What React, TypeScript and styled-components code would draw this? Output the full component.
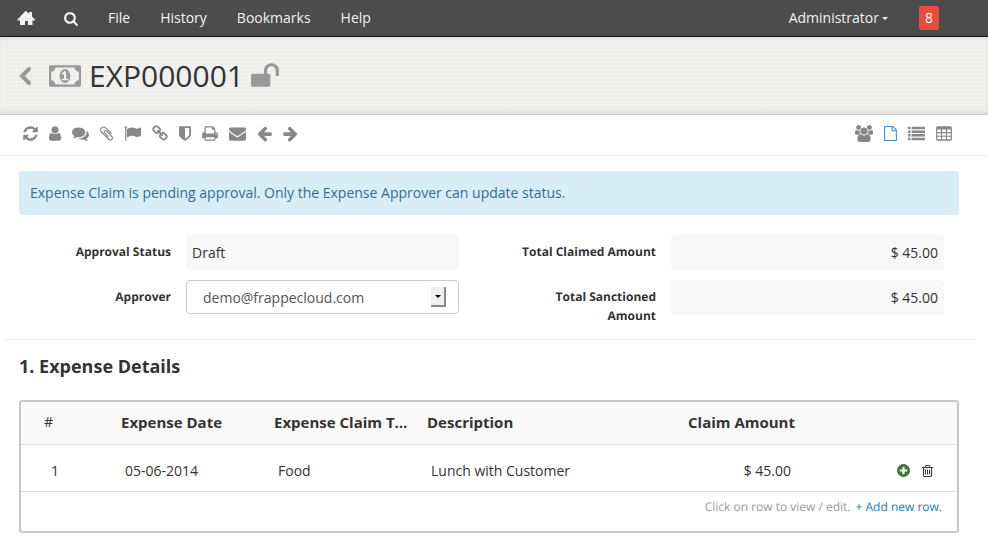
import React from 'react';
import styled, { createGlobalStyle } from 'styled-components';

const GlobalStyle = createGlobalStyle`
  *, *::before, *::after { box-sizing: border-box; }
  body {
    margin: 0;
    background: #fff;
    color: #333;
    font-family: 'Open Sans', 'Noto Sans', sans-serif;
    font-size: 14px;
    line-height: 20px;
  }
  a { text-decoration: none; color: inherit; }
  button { font: inherit; color: inherit; background: none; border: 0; padding: 0; margin: 0; cursor: pointer; }
`;

/* Glyphs are drawn on a 1792-unit em square; `box` is the visible horizontal span. */
type Glyph = { box: [number, number]; d: string };

const rect = (x: number, y: number, w: number, h: number) => `M${x} ${y}h${w}v${h}h${-w}z`;

const glyphs: Record<string, Glyph> = {
  search: { box: [64, 1664], d: 'M1216 832q0-185-131.5-316.5t-316.5-131.5-316.5 131.5-131.5 316.5 131.5 316.5 316.5 131.5 316.5-131.5 131.5-316.5zm512 832q0 52-38 90t-90 38q-54 0-90-38l-343-342q-179 124-399 124-143 0-273.5-55.5t-225-150-150-225-55.5-273.5 55.5-273.5 150-225 225-150 273.5-55.5 273.5 55.5 225 150 150 225 55.5 273.5q0 220-124 399l343 343q37 37 37 90z' },
  money: { box: [0, 1920], d: 'M768 1152h384v-96h-128v-448h-114l-148 137 77 80q42-37 55-57h2v288h-128v96zm512-256q0 70-21 142t-59.5 134-101.5 101-138 39-138-39-101.5-101-59.5-134-21-142 21-142 59.5-134 101.5-101 138-39 138 39 101.5 101 59.5 134 21 142zm512 256v-512q-106 0-181-75t-75-181h-1152q0 106-75 181t-181 75v512q106 0 181 75t75 181h1152q0-106 75-181t181-75zm128-832v1152q0 26-19 45t-45 19h-1792q-26 0-45-19t-19-45v-1152q0-26 19-45t45-19h1792q26 0 45 19t19 45z' },
  unlock: { box: [64, 1664], d: 'M1728 576v256q0 26-19 45t-45 19h-64q-26 0-45-19t-19-45v-256q0-106-75-181t-181-75-181 75-75 181v192h96q40 0 68 28t28 68v576q0 40-28 68t-68 28h-960q-40 0-68-28t-28-68v-576q0-40 28-68t68-28h672v-192q0-185 131.5-316.5t316.5-131.5 316.5 131.5 131.5 316.5z' },
  refresh: { box: [128, 1536], d: 'M1639 1056q0 5-1 7-64 268-268 434.5t-478 166.5q-146 0-282.5-55t-243.5-157l-129 129q-19 19-45 19t-45-19-19-45v-448q0-26 19-45t45-19h448q26 0 45 19t19 45-19 45l-137 137q71 66 161 102t187 36q134 0 250-65t186-179q11-17 53-117 8-23 30-23h192q13 0 22.5 9.5t9.5 22.5zm25-800v448q0 26-19 45t-45 19h-448q-26 0-45-19t-19-45 19-45l138-138q-148-137-349-137-134 0-250 65t-186 179q-11 17-53 117-8 23-30 23h-199q-13 0-22.5-9.5t-9.5-22.5v-7q65-268 270-434.5t480-166.5q146 0 284 55.5t245 156.5l130-129q19-19 45-19t45 19 19 45z' },
  user: { box: [256, 1280], d: 'M1536 1399q0 109-62.5 187t-150.5 78h-854q-88 0-150.5-78t-62.5-187q0-85 8.5-160.5t31.5-152 58.5-131 94-89 134.5-34.5q131 128 313 128t313-128q76 0 134.5 34.5t94 89 58.5 131 31.5 152 8.5 160.5zm-256-887q0 159-112.5 271.5t-271.5 112.5-271.5-112.5-112.5-271.5 112.5-271.5 271.5-112.5 271.5 112.5 112.5 271.5z' },
  comments: { box: [0, 1792], d: 'M1408 768q0 139-94 257t-256.5 186.5-353.5 68.5q-86 0-176-16-124 88-278 128-36 9-86 16h-3q-11 0-20.5-8t-11.5-21q-1-3-1-6.5t.5-6.5 2-6l2.5-5 3.5-5.5 4-5 4.5-5 4-4.5q5-6 23-25t26-29.5 22.5-29 25-38.5 20.5-44q-124-72-195-177t-71-224q0-139 94-257t256.5-186.5 353.5-68.5 353.5 68.5 256.5 186.5 94 257zm384 256q0 120-71 224.5t-195 176.5q10 24 20.5 44t25 38.5 22.5 29 26 29.5 23 25q1 1 4 4.5t4.5 5 4 5 3.5 5.5l2.5 5 2 6 .5 6.5-1 6.5q-3 14-13 22t-22 7q-50-7-86-16-154-40-278-128-90 16-176 16-271 0-472-132 58 4 88 4 161 0 309-45t264-129q125-92 192-212t67-254q0-77-23-152 129 71 204 178t75 230z' },
  paperclip: { box: [196, 1400], d: 'M1596 1385q0 117-79 196t-196 79q-135 0-235-100l-777-776q-113-115-113-271 0-159 110-270t269-111q158 0 273 113l605 606q10 10 10 22 0 16-30.5 46.5t-46.5 30.5q-13 0-23-10l-606-607q-79-77-181-77-106 0-179 75t-73 181q0 105 76 181l776 777q63 63 145 63 64 0 106-42t42-106q0-82-63-145l-581-581q-26-24-60-24-29 0-48 19t-19 48q0 32 25 59l410 410q10 10 10 22 0 16-31 47t-47 31q-12 0-22-10l-410-410q-63-61-63-149 0-82 57-139t139-57q88 0 149 63l581 581q100 98 100 235z' },
  flag: { box: [0, 1792], d: 'M320 256q0 72-64 110v1266q0 13-9.5 22.5t-22.5 9.5h-64q-13 0-22.5-9.5t-9.5-22.5v-1266q-64-38-64-110 0-53 37.5-90.5t90.5-37.5 90.5 37.5 37.5 90.5zm1472 64v763q0 25-12.5 38.5t-39.5 27.5q-215 116-369 116-61 0-123.5-22t-108.5-48-115.5-48-142.5-22q-192 0-464 146-17 9-33 9-26 0-45-19t-19-45v-742q0-32 31-55 21-14 79-43 236-120 421-120 107 0 200 29t219 88q38 19 88 19 54 0 117.5-21t110-47 88-47 54.5-21q26 0 45 19t19 45z' },
  link: { box: [64, 1664], d: 'M1520 1216q0-40-28-68l-208-208q-28-28-68-28-42 0-72 32 3 3 19 18.5t21.5 21.5 15 19 13 25.5 3.5 27.5q0 40-28 68t-68 28q-15 0-27.5-3.5t-25.5-13-19-15-21.5-21.5-18.5-19q-33 31-33 73 0 40 28 68l206 207q27 27 68 27 40 0 68-26l147-146q28-28 28-67zm-703-705q0-40-28-68l-206-207q-28-28-68-28-39 0-68 27l-147 146q-28 28-28 67 0 40 28 68l208 208q27 27 68 27 42 0 72-31-3-3-19-18.5t-21.5-21.5-15-19-13-25.5-3.5-27.5q0-40 28-68t68-28q15 0 27.5 3.5t25.5 13 19 15 21.5 21.5 18.5 19q33-31 33-73zm895 705q0 120-85 203l-147 146q-83 83-203 83-121 0-204-85l-206-207q-83-83-83-203 0-123 88-209l-88-88q-86 88-208 88-120 0-204-84l-208-208q-84-84-84-204t85-203l147-146q83-83 203-83 121 0 204 85l206 207q83 83 83 203 0 123-88 209l88 88q86-88 208-88 120 0 204 84l208 208q84 84 84 204z' },
  shield: { box: [256, 1280], d: 'M1344 960v-640h-448v1137q119-63 213-137 235-184 235-360zm192-768v768q0 86-33.5 170.5t-83 150-118 127.5-126.5 103-121 77.5-89.5 49.5-42.5 20q-12 6-26 6t-26-6q-16-7-42.5-20t-89.5-49.5-121-77.5-126.5-103-118-127.5-83-150-33.5-170.5v-768q0-26 19-45t45-19h1152q26 0 45 19t19 45z' },
  print: { box: [64, 1664], d: 'M448 1536h896v-256h-896v256zm0-640h896v-384h-160q-40 0-68-28t-28-68v-160h-640v640zm1152 64q0-26-19-45t-45-19-45 19-19 45 19 45 45 19 45-19 19-45zm128 0v416q0 13-9.5 22.5t-22.5 9.5h-224v160q0 40-28 68t-68 28h-960q-40 0-68-28t-28-68v-160h-224q-13 0-22.5-9.5t-9.5-22.5v-416q0-79 56.5-135.5t135.5-56.5h64v-544q0-40 28-68t68-28h672q40 0 88 20t76 48l152 152q28 28 48 76t20 88v256h64q79 0 135.5 56.5t56.5 135.5z' },
  envelope: { box: [0, 1792], d: 'M1792 710v794q0 66-47 113t-113 47h-1472q-66 0-113-47t-47-113v-794q44 49 101 87 362 246 497 345 57 42 92.5 65.5t94.5 48 110 24.5h2q51 0 110-24.5t94.5-48 92.5-65.5q170-123 498-345 57-39 100-87zm0-294q0 79-49 151t-122 123q-376 261-468 325-10 7-42.5 31t-54 38.5-52 32.5-57.5 27-50 9h-2q-23 0-50-9t-57.5-27-52-32.5-54-38.5-42.5-31q-91-64-262-182.5t-205-142.5q-62-42-117-115.5t-55-136.5q0-78 41.5-130t118.5-52h1472q65 0 112.5 47t47.5 113z' },
  arrow: { box: [128, 1536], d: 'M1664 896v128q0 53-32.5 90.5t-84.5 37.5h-704l293 294q38 36 38 90t-38 90l-75 76q-37 37-90 37-52 0-91-37l-651-652q-37-37-37-90 0-52 37-91l651-650q38-38 91-38 52 0 90 38l75 74q38 38 38 91t-38 91l-293 293h704q52 0 84.5 37.5t32.5 90.5z' },
  users: { box: [0, 1920], d: 'M593 896q-162 5-265 128h-134q-82 0-138-40.5t-56-118.5q0-353 124-353 6 0 43.5 21t97.5 42.5 119 21.5q67 0 133-23-5 37-5 66 0 139 81 256zm1071 637q0 120-73 189.5t-194 69.5h-874q-121 0-194-69.5t-73-189.5q0-53 3.5-103.5t14-109 26.5-108.5 43-97.5 62-81 85.5-53.5 111.5-20q10 0 43 21.5t73 48 107 48 135 21.5 135-21.5 107-48 73-48 43-21.5q61 0 111.5 20t85.5 53.5 62 81 43 97.5 26.5 108.5 14 109 3.5 103.5zm-1024-1277q0 106-75 181t-181 75-181-75-75-181 75-181 181-75 181 75 75 181zm704 384q0 159-112.5 271.5t-271.5 112.5-271.5-112.5-112.5-271.5 112.5-271.5 271.5-112.5 271.5 112.5 112.5 271.5zm576 225q0 78-56 118.5t-138 40.5h-134q-103-123-265-128 81-117 81-256 0-29-5-66 66 23 133 23 59 0 119-21.5t97.5-42.5 43.5-21q124 0 124 353zm-128-609q0 106-75 181t-181 75-181-75-75-181 75-181 181-75 181 75 75 181z' },
  file: { box: [128, 1536], d: 'M1596 380q28 28 48 76t20 88v1152q0 40-28 68t-68 28h-1344q-40 0-68-28t-28-68v-1600q0-40 28-68t68-28h896q40 0 88 20t76 48zm-444-244v376h376q-10-29-22-41l-313-313q-12-12-41-22zm384 1528v-1024h-416q-40 0-68-28t-28-68v-416h-768v1536h1280z' },
  list: { box: [0, 1792], d: [192, 576, 960, 1344].map((y) => rect(0, y, 256, 256) + rect(384, y, 1408, 256)).join('') },
  table: { box: [64, 1664], d: 'M224 128h1344q160 0 160 160v1216q0 160-160 160h-1344q-160 0-160-160v-1216q0-160 160-160z' + [480, 864, 1248].map((y) => rect(192, y, 384, 256) + rect(704, y, 384, 256) + rect(1216, y, 384, 256)).join('') },
  plus: { box: [128, 1536], d: 'M1344 960v-128q0-26-19-45t-45-19h-256v-256q0-26-19-45t-45-19h-128q-26 0-45 19t-19 45v256h-256q-26 0-45 19t-19 45v128q0 26 19 45t45 19h256v256q0 26 19 45t45 19h128q26 0 45-19t19-45v-256h256q26 0 45-19t19-45zm320-64q0 209-103 385.5t-279.5 279.5-385.5 103-385.5-103-279.5-279.5-103-385.5 103-385.5 279.5-279.5 385.5-103 385.5 103 279.5 279.5 103 385.5z' },
  trash: { box: [192, 1408], d: 'M704 736v576q0 14-9 23t-23 9h-64q-14 0-23-9t-9-23v-576q0-14 9-23t23-9h64q14 0 23 9t9 23zm256 0v576q0 14-9 23t-23 9h-64q-14 0-23-9t-9-23v-576q0-14 9-23t23-9h64q14 0 23 9t9 23zm256 0v576q0 14-9 23t-23 9h-64q-14 0-23-9t-9-23v-576q0-14 9-23t23-9h64q14 0 23 9t9 23zm128 724v-948h-896v948q0 22 7 40.5t14.5 27 10.5 8.5h832q3 0 10.5-8.5t14.5-27 7-40.5zm-672-1076h448l-48-117q-7-9-17-11h-317q-10 2-17 11zm928 32v64q0 14-9 23t-23 9h-96v948q0 83-47 143.5t-113 60.5h-832q-66 0-113-58.5t-47-141.5v-952h-96q-14 0-23-9t-9-23v-64q0-14 9-23t23-9h309l70-167q15-37 54-63t79-26h320q40 0 79 26t54 63l70 167h309q14 0 23 9t9 23z' },
};

const Svg = styled.svg<{ $flip?: boolean }>`
  display: block;
  flex: none;
  fill: currentColor;
  overflow: visible;
  transform: ${(p) => (p.$flip ? 'scaleX(-1)' : 'none')};
`;

function Icon({ name, size, flip }: { name: string; size: number; flip?: boolean }) {
  const g = glyphs[name];
  const width = Math.round((g.box[1] * size) / 1792);
  return (
    <Svg $flip={flip} aria-hidden="true" width={width} height={size} viewBox={`${g.box[0]} 0 ${g.box[1]} 1792`}>
      <path fillRule="evenodd" d={g.d} />
    </Svg>
  );
}

const Navbar = styled.nav`
  display: flex;
  align-items: center;
  height: 37px;
  padding: 0 34px 0 3px;
  background: #4c4c4c;
  border-bottom: 1px solid #111;
  color: #f2f2f2;
`;

const NavItem = styled.a`
  display: flex;
  align-items: center;
  padding: 0 15px;
`;

const UserMenu = styled.button`
  display: flex;
  align-items: center;
  gap: 3px;
  margin-left: auto;
  padding: 0 16px;
`;

const Caret = styled.span`
  border: 3px solid transparent;
  border-top-color: currentColor;
  border-bottom: 0;
`;

const Badge = styled.a`
  margin: 0 15px;
  padding: 2px 6px;
  border-radius: 2px;
  background: #e74c3c;
  color: #fff;
`;

const TitleBar = styled.header`
  display: flex;
  align-items: center;
  height: 78px;
  padding: 0 19px;
  border-bottom: 1px solid #c7c7c7;
  box-shadow: inset 0 4px 6px -4px rgba(0, 0, 0, 0.12), inset 0 -4px 6px -4px rgba(0, 0, 0, 0.12);
  background:
    repeating-linear-gradient(0deg, rgba(255, 255, 255, 0.25) 0 1px, transparent 1px 4px),
    repeating-linear-gradient(90deg, rgba(255, 255, 255, 0.25) 0 1px, transparent 1px 4px),
    #ededec;
  color: #999;
`;

const BackLink = styled.a`
  margin-right: 18px;
`;

const Title = styled.h1`
  margin: 0 7px 0 8px;
  font-size: 30px;
  font-weight: 400;
  line-height: 40px;
  color: #333;
`;

const Toolbar = styled.div`
  display: flex;
  align-items: center;
  justify-content: space-between;
  height: 41px;
  padding: 0 36px 3px 23px;
  border-bottom: 1px solid #eee;
  color: #888;
`;

const ToolGroup = styled.div`
  display: flex;
  align-items: center;
  gap: 11px;
`;

const ToolButton = styled.button<{ $active?: boolean }>`
  color: ${(p) => (p.$active ? '#428bca' : 'inherit')};
`;

const Page = styled.main`
  margin: 0 14px 0 4px;
`;

const Alert = styled.p`
  margin: 15px 15px 20px;
  padding: 12px 11px;
  border-radius: 4px;
  background: #d9edf7;
  color: #31708f;
`;

const Form = styled.form`
  display: grid;
  grid-template-columns: 1fr 1fr;
  column-gap: 45px;
  padding: 0 30px 14px 15px;
  border-bottom: 1px solid #eee;
`;

const FieldColumn = styled.div`
  display: flex;
  flex-direction: column;
  gap: 10px;
`;

const Field = styled.div`
  display: grid;
  grid-template-columns: 152fr 273fr;
  column-gap: 15px;
  align-items: start;
`;

const Label = styled.label`
  padding: 7px 0 0 15px;
  text-align: right;
  font-size: 12px;
  font-weight: 700;
  line-height: 19px;
  text-rendering: geometricPrecision;
`;

const ReadOnly = styled.output<{ $right?: boolean }>`
  display: block;
  min-height: 34px;
  padding: 8px 6px 7px;
  border-radius: 4px;
  background: #f8f8f8;
  text-align: ${(p) => (p.$right ? 'right' : 'left')};
`;

const SelectBox = styled.div`
  position: relative;
`;

const Select = styled.select`
  display: block;
  appearance: none;
  width: 100%;
  height: 34px;
  padding: 1px 36px 0 16px;
  border: 1px solid #ccc;
  border-radius: 4px;
  background: #fff;
  font: inherit;
  color: #555;
`;

const SelectArrow = styled.span`
  position: absolute;
  top: 7px;
  right: 13px;
  display: flex;
  align-items: center;
  justify-content: center;
  width: 15px;
  height: 20px;
  border: 0 solid #888;
  border-width: 0 2px 2px 0;
  background: #f0f0f0;
  color: #000;
  pointer-events: none;
`;

const SectionTitle = styled.h2`
  margin: 14px 15px 22px;
  font-size: 18px;
  font-weight: 700;
  line-height: 24px;
`;

const GridBox = styled.section`
  margin: 0 15px;
  border: 2px solid #c7c7c7;
  border-radius: 3px;
`;

const Table = styled.table`
  width: 100%;
  table-layout: fixed;
  border-collapse: collapse;
`;

const Col = styled.col<{ $w?: number }>`
  width: ${(p) => (p.$w ? `${p.$w}px` : 'auto')};
`;

const HeadCell = styled.th<{ $right?: boolean }>`
  height: 42px;
  padding: 0 15px 2px 0;
  background: #f9f9f9;
  border-bottom: 1px solid #ddd;
  overflow: hidden;
  text-overflow: ellipsis;
  white-space: nowrap;
  text-align: ${(p) => (p.$right ? 'right' : 'left')};
  font-size: 15px;
  font-weight: 700;
`;

const IndexHead = styled(HeadCell)`
  padding-left: 23px;
  font-size: 14px;
  font-weight: 400;
`;

const Cell = styled.td<{ $right?: boolean }>`
  height: 47px;
  padding: 6px 19px 0 4px;
  border-bottom: 1px solid #ddd;
  white-space: nowrap;
  text-align: ${(p) => (p.$right ? 'right' : 'left')};
`;

const IndexCell = styled(Cell)`
  padding-left: 30px;
`;

const RowActions = styled.div`
  display: flex;
  justify-content: flex-end;
  align-items: center;
  gap: 12px;
  padding-right: 5px;
`;

const RowButton = styled.button<{ $color: string }>`
  color: ${(p) => p.$color};
`;

const GridFooter = styled.div`
  display: flex;
  justify-content: flex-end;
  gap: 5px;
  padding: 5px 15px 14px;
  font-size: 12px;
  color: #999;
  text-rendering: geometricPrecision;
`;

const AddLink = styled.a`
  color: #1d78c1;
`;

const tools: { name: string; label: string; flip?: boolean }[] = [
  { name: 'refresh', label: 'Refresh' },
  { name: 'user', label: 'Assign' },
  { name: 'comments', label: 'Comments' },
  { name: 'paperclip', label: 'Attachments' },
  { name: 'flag', label: 'Flag' },
  { name: 'link', label: 'Links' },
  { name: 'shield', label: 'Permissions' },
  { name: 'print', label: 'Print' },
  { name: 'envelope', label: 'Email' },
  { name: 'arrow', label: 'Previous record' },
  { name: 'arrow', label: 'Next record', flip: true },
];

const views = [
  { name: 'users', label: 'Shared with' },
  { name: 'file', label: 'Form view', active: true },
  { name: 'list', label: 'List view' },
  { name: 'table', label: 'Report view' },
];

const rows = [{ date: '05-06-2014', type: 'Food', description: 'Lunch with Customer', amount: '$ 45.00' }];

export default function App() {
  return (
    <>
      <GlobalStyle />
      <Navbar>
        <NavItem href="#home" aria-label="Home">
          <Svg aria-hidden="true" width="16" height="14" viewBox="0 0 16 14">
            <path d="M8 0L11 2.700V1H14V5.500L17 8.500V9.500H14.500V14H10V10H7V14H2V9.500H-.5V8.500L7 .6Q7.500 0 8 0Z" />
          </Svg>
        </NavItem>
        <NavItem href="#search" aria-label="Search"><Icon name="search" size={15} /></NavItem>
        <NavItem href="#file">File</NavItem>
        <NavItem href="#history">History</NavItem>
        <NavItem href="#bookmarks">Bookmarks</NavItem>
        <NavItem href="#help">Help</NavItem>
        <UserMenu type="button">Administrator<Caret /></UserMenu>
        <Badge href="#notifications">8</Badge>
      </Navbar>

      <TitleBar>
        <BackLink href="#list" aria-label="Back">
          <Svg aria-hidden="true" width="12" height="20" viewBox="0 0 12 20">
            <path d="M10 3L3 10l7 7" fill="none" stroke="currentColor" strokeWidth="4" strokeLinecap="round" />
          </Svg>
        </BackLink>
        <Icon name="money" size={30} />
        <Title>EXP000001</Title>
        <Icon name="unlock" size={30} />
      </TitleBar>

      <Toolbar>
        <ToolGroup>
          {tools.map((t) => (
            <ToolButton key={t.label} type="button" aria-label={t.label}>
              <Icon name={t.name} size={17} flip={t.flip} />
            </ToolButton>
          ))}
        </ToolGroup>
        <ToolGroup>
          {views.map((v) => (
            <ToolButton key={v.label} type="button" aria-label={v.label} $active={v.active}>
              <Icon name={v.name} size={v.active ? 15 : 17} />
            </ToolButton>
          ))}
        </ToolGroup>
      </Toolbar>

      <Page>
        <Alert role="status">Expense Claim is pending approval. Only the Expense Approver can update status.</Alert>

        <Form>
          <FieldColumn>
            <Field>
              <Label htmlFor="status">Approval Status</Label>
              <ReadOnly id="status">Draft</ReadOnly>
            </Field>
            <Field>
              <Label htmlFor="approver">Approver</Label>
              <SelectBox>
                <Select id="approver" defaultValue="demo@frappecloud.com">
                  <option>demo@frappecloud.com</option>
                </Select>
                <SelectArrow><Caret /></SelectArrow>
              </SelectBox>
            </Field>
          </FieldColumn>
          <FieldColumn>
            <Field>
              <Label htmlFor="claimed">Total Claimed Amount</Label>
              <ReadOnly id="claimed" $right>$ 45.00</ReadOnly>
            </Field>
            <Field>
              <Label htmlFor="sanctioned">Total Sanctioned Amount</Label>
              <ReadOnly id="sanctioned" $right>$ 45.00</ReadOnly>
            </Field>
          </FieldColumn>
        </Form>

        <SectionTitle>1. Expense Details</SectionTitle>

        <GridBox>
          <Table>
            <colgroup>
              <Col $w={100} />
              <Col $w={153} />
              <Col $w={153} />
              <Col />
              <Col $w={140} />
              <Col $w={147} />
            </colgroup>
            <thead>
              <tr>
                <IndexHead>#</IndexHead>
                <HeadCell>Expense Date</HeadCell>
                <HeadCell>Expense Claim Type</HeadCell>
                <HeadCell>Description</HeadCell>
                <HeadCell $right>Claim Amount</HeadCell>
                <HeadCell aria-label="Actions" />
              </tr>
            </thead>
            <tbody>
              {rows.map((r, i) => (
                <tr key={r.date}>
                  <IndexCell>{i + 1}</IndexCell>
                  <Cell>{r.date}</Cell>
                  <Cell>{r.type}</Cell>
                  <Cell>{r.description}</Cell>
                  <Cell $right>{r.amount}</Cell>
                  <Cell>
                    <RowActions>
                      <RowButton type="button" aria-label="Insert row" $color="#3c763d"><Icon name="plus" size={15} /></RowButton>
                      <RowButton type="button" aria-label="Delete row" $color="#333"><Icon name="trash" size={14} /></RowButton>
                    </RowActions>
                  </Cell>
                </tr>
              ))}
            </tbody>
          </Table>
          <GridFooter>
            <span>Click on row to view / edit.</span>
            <AddLink href="#add">+ Add new row.</AddLink>
          </GridFooter>
        </GridBox>
      </Page>
    </>
  );
}
